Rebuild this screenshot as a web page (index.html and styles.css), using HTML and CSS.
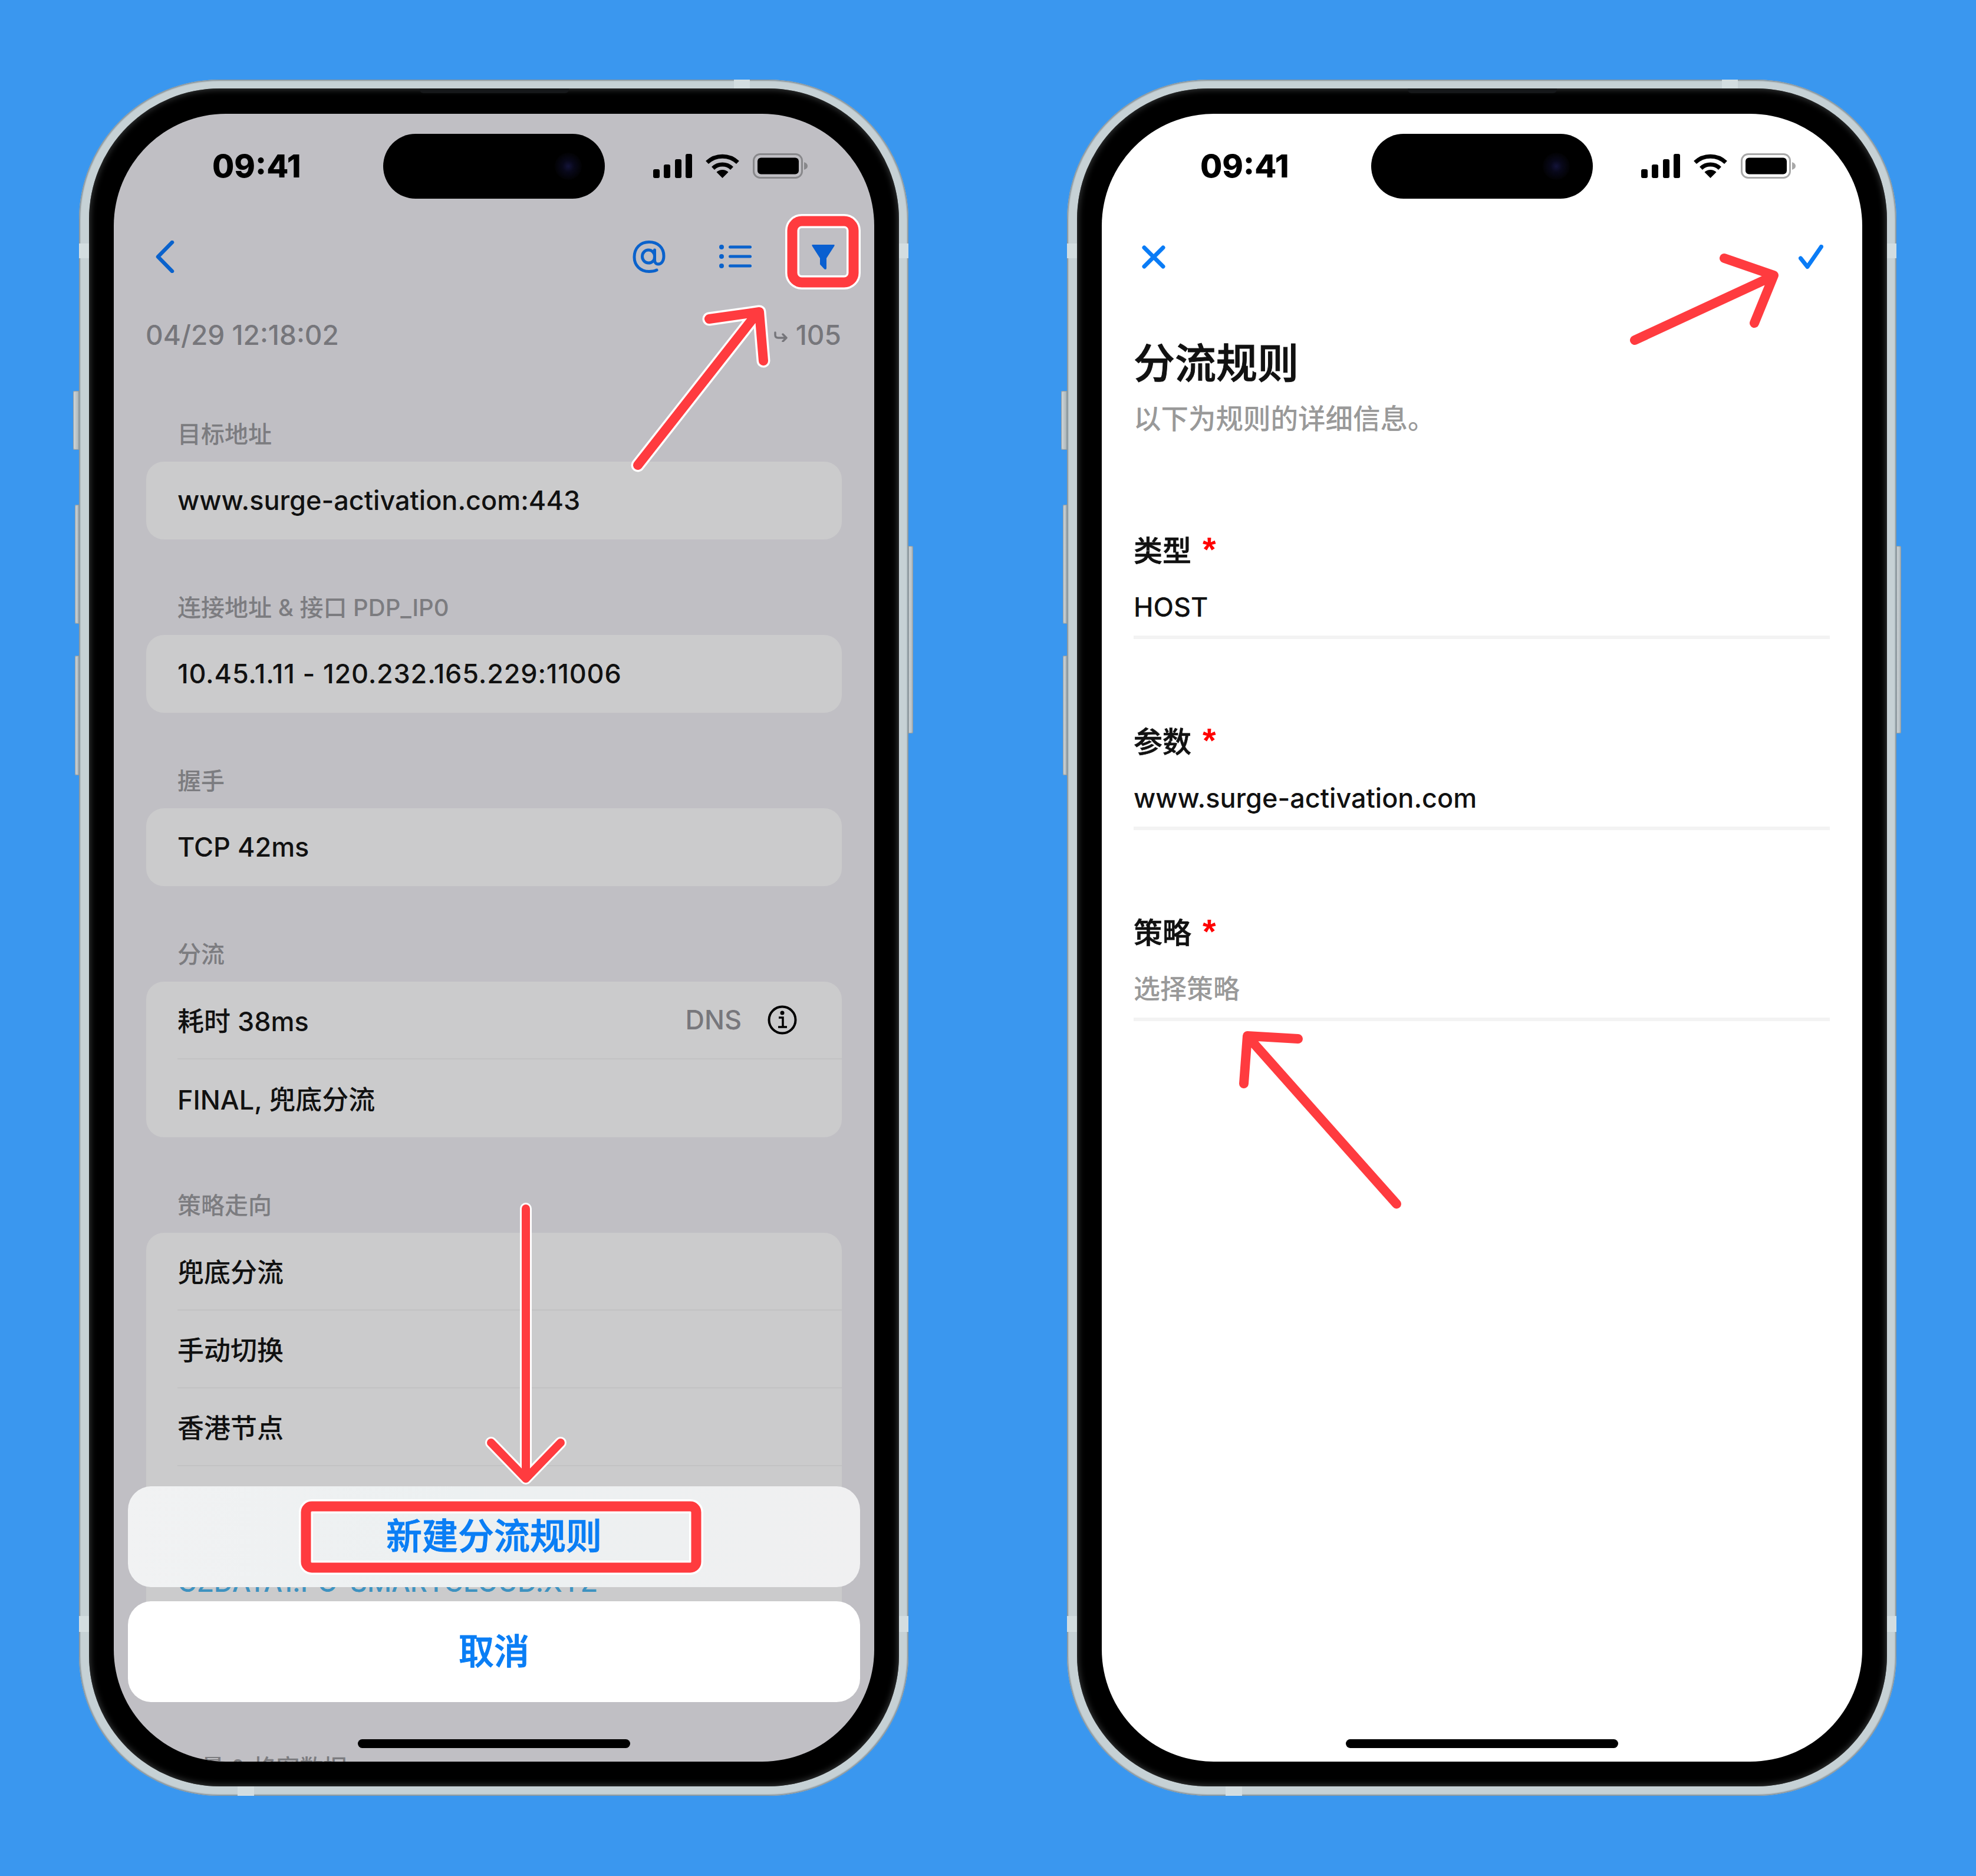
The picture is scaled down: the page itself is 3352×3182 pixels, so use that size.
FILE: index.html
```html
<!DOCTYPE html>
<html lang="zh-CN">
  <head>
    <meta charset="UTF-8" />
    <meta name="viewport" content="width=device-width, initial-scale=1.0" />
    <title>新建分流规则</title>
    <link rel="stylesheet" href="styles.css">
  </head>
  <body>
    <svg class="sprite" width="0" height="0">
      <symbol id="signal" viewBox="0 0 66 41">
        <rect x="0" y="26" width="11" height="15" rx="3" />
        <rect x="18" y="18" width="11" height="23" rx="3" />
        <rect x="37" y="9" width="11" height="32" rx="3" />
        <rect x="55" y="0" width="11" height="41" rx="3" />
      </symbol>
      <symbol id="wifi" viewBox="0 0 59 42">
        <path d="M3.5 15.5 A38 38 0 0 1 55.5 15.5" fill="none" stroke="#000" stroke-width="7" />
        <path d="M13.5 25.5 A23 23 0 0 1 45.5 25.5" fill="none" stroke="#000" stroke-width="7" />
        <path d="M29.5 42 L19.5 32 A14.5 14.5 0 0 1 39.5 32 Z" />
      </symbol>
    </svg>

    <div class="page">
      <!-- left phone: request detail with action sheet -->
      <div class="phone">
        <span class="btn btn-a"></span><span class="btn btn-b"></span><span class="btn btn-c"></span><span class="btn btn-r"></span>
        <span class="band band-top"></span><span class="band band-left"></span><span class="band band-right"></span>
        <span class="band band-bottom"></span><span class="band band-left2"></span><span class="band band-right2"></span>
        <div class="bezel">
          <span class="speaker"></span>
          <div class="screen screen-dim">
            <div class="status">
              <div class="time">09:41</div>
              <div class="island"><span class="camera"></span></div>
              <div class="status-icons">
                <svg class="ic-signal"><use href="#signal" /></svg>
                <svg class="ic-wifi"><use href="#wifi" /></svg>
                <svg class="ic-battery" viewBox="0 0 93 43">
                  <rect x="1.5" y="1.5" width="82" height="40" rx="11" fill="none" stroke="#88888b" stroke-width="3" />
                  <rect x="8" y="7.5" width="70" height="28" rx="6" />
                  <path d="M87 15 Q93 17 93 21.5 Q93 26 87 28 Z" fill="#88888b" />
                </svg>
              </div>
            </div>

            <div class="nav">
              <svg class="ic-back" viewBox="0 0 32 55"><path d="M28 3 L4 27.5 L28 52" /></svg>
              <svg class="ic-at" viewBox="0 0 56 55"><path d="M41 50 C37 52 33 52.500 28 52.500 C13 52.500 3 42 3 28 C3 13 13 2.500 28 2.500 C43 2.500 53 12 53 26 C53 35 49 40 43.500 40 C39.500 40 37.500 37 37.500 33 L37.500 16 M37.500 27 C37.500 34 33 38 27 38 C21 38 16.500 33 16.500 27 C16.500 21 21 16 27 16 C33 16 37.500 21 37.500 27" /></svg>
              <svg class="ic-list" viewBox="0 0 55 41">
                <circle cx="4" cy="4" r="4" /><circle cx="4" cy="20" r="4" /><circle cx="4" cy="36" r="4" />
                <rect x="16" y="1.500" width="39" height="5" rx="2.500" /><rect x="16" y="17.500" width="39" height="5" rx="2.500" /><rect x="16" y="33.500" width="39" height="5" rx="2.500" />
              </svg>
              <svg class="ic-filter" viewBox="0 0 39 44"><path d="M1 1 H38 Q39 1 38.500 3 L25 24 V41 Q25 43 23 43 Q22 43 21 42 L14.500 35 Q14 34.500 14 34 V24 L0.500 3 Q0 1 1 1 Z" /></svg>
            </div>

            <div class="meta">
              <span>04/29 12:18:02</span>
              <span class="meta-right">
                <svg class="ic-hook" viewBox="0 0 26 18"><path d="M3 2 V6 Q3 11 8 11 H22 M16 5 L22 11 L16 17" /></svg>
                <span>105</span>
              </span>
            </div>

            <div class="section section-first">
              <div class="label">目标地址</div>
              <div class="card"><div class="row">www.surge-activation.com:443</div></div>
            </div>
            <div class="section">
              <div class="label">连接地址 &amp; 接口 PDP_IP0</div>
              <div class="card"><div class="row row-num">10.45.1.11 - 120.232.165.229:11006</div></div>
            </div>
            <div class="section">
              <div class="label">握手</div>
              <div class="card"><div class="row">TCP 42ms</div></div>
            </div>
            <div class="section">
              <div class="label">分流</div>
              <div class="card">
                <div class="row">
                  <span class="row-main">耗时 38ms</span>
                  <span class="row-note">DNS</span>
                  <svg class="ic-info" viewBox="0 0 50 50">
                    <circle cx="25" cy="25" r="22.500" />
                    <path class="info-i" d="M19 21 H26 V37 M18 37 H33" />
                    <circle class="info-dot" cx="25" cy="13" r="3.500" />
                  </svg>
                </div>
                <div class="row">FINAL, 兜底分流</div>
              </div>
            </div>
            <div class="section">
              <div class="label">策略走向</div>
              <div class="card">
                <div class="row">兜底分流</div>
                <div class="row">手动切换</div>
                <div class="row">香港节点</div>
                <div class="row"></div>
                <div class="row row-link">CZDATA1.PO-SMARTCLOUD.XYZ</div>
                <div class="row"></div>
              </div>
            </div>
            <div class="section">
              <div class="label">流量 &amp; 格密数据</div>
            </div>

            <div class="sheets">
              <div class="sheet sheet-soft">新建分流规则</div>
              <div class="sheet">取消</div>
            </div>
            <div class="home"></div>
          </div>
        </div>
      </div>

      <!-- right phone: rule form -->
      <div class="phone">
        <span class="btn btn-a"></span><span class="btn btn-b"></span><span class="btn btn-c"></span><span class="btn btn-r"></span>
        <span class="band band-top"></span><span class="band band-left"></span><span class="band band-right"></span>
        <span class="band band-bottom"></span><span class="band band-left2"></span><span class="band band-right2"></span>
        <div class="bezel">
          <span class="speaker"></span>
          <div class="screen">
            <div class="status">
              <div class="time">09:41</div>
              <div class="island"><span class="camera"></span></div>
              <div class="status-icons">
                <svg class="ic-signal"><use href="#signal" /></svg>
                <svg class="ic-wifi"><use href="#wifi" /></svg>
                <svg class="ic-battery" viewBox="0 0 93 43">
                  <rect x="1.5" y="1.5" width="82" height="40" rx="11" fill="none" stroke="#a8a8a8" stroke-width="3" />
                  <rect x="8" y="7.5" width="70" height="28" rx="6" />
                  <path d="M87 15 Q93 17 93 21.5 Q93 26 87 28 Z" fill="#a8a8a8" />
                </svg>
              </div>
            </div>

            <div class="nav nav-form">
              <svg class="ic-close" viewBox="0 0 40 40"><path d="M4 4 L36 36 M36 4 L4 36" /></svg>
              <svg class="ic-check" viewBox="0 0 42 42"><path d="M3.500 23 L15 37.500 L38.500 3.500" /></svg>
            </div>

            <div class="form">
              <h1 class="form-title">分流规则</h1>
              <p class="form-sub">以下为规则的详细信息。</p>

              <div class="field field-first">
                <div class="field-label">类型 <span class="req">*</span></div>
                <div class="field-value">HOST</div>
              </div>
              <div class="field">
                <div class="field-label">参数 <span class="req">*</span></div>
                <div class="field-value">www.surge-activation.com</div>
              </div>
              <div class="field">
                <div class="field-label">策略 <span class="req">*</span></div>
                <div class="field-value field-empty">选择策略</div>
              </div>
            </div>
            <div class="home"></div>
          </div>
        </div>
      </div>

      <!-- red marks drawn on top of both phones -->
      <svg class="marks" viewBox="0 0 3352 3182">
        <g class="halo">
          <rect x="1344" y="375" width="104" height="104" rx="16" />
          <path class="thick" d="M1082 789 L1283 533 M1203 541 L1288 529 L1295 612" />
          <path d="M892 2050 V2508 M833 2447 L892 2508 L951 2447" />
          <rect x="519" y="2555" width="662" height="104" rx="10" />
        </g>
        <g class="ink">
          <rect class="box" x="1344" y="375" width="104" height="104" rx="16" />
          <path class="thick" d="M1082 789 L1283 533 M1203 541 L1288 529 L1295 612" />
          <path d="M892 2050 V2508 M833 2447 L892 2508 L951 2447" />
          <rect class="box" x="519" y="2555" width="662" height="104" rx="10" />
          <path class="thick" d="M2773 577 L3004 470 M2925 438 L3009 467 L2976 548" />
          <path class="thick" d="M2369 2042 L2120 1762 M2202 1762 L2116 1757 L2110 1838" />
        </g>
      </svg>
    </div>
  </body>
</html>
```

FILE: styles.css
```css
html,
body {
  margin: 0;
  height: 3182px;
  overflow: hidden;
  background-color: #3a97ef;
}
body {
  font-family: Inter, "Noto Sans CJK SC", sans-serif;
  color: #111;
}
.sprite {
  position: absolute;
}
.page {
  position: relative;
  display: flex;
  gap: 269px;
  padding: 135px 0 0 134px;
  height: 3047px;
}

/* phone body */
.phone {
  position: relative;
  box-sizing: border-box;
  width: 1407px;
  height: 2911px;
  padding: 15px 16px 16px 17px;
  border-radius: 238px;
  background: #c6d1d5;
  box-shadow: inset 0 0 2px 2px #87939a;
}
.btn {
  position: absolute;
  left: -7px;
  width: 7px;
  background: linear-gradient(90deg, #d4dadd, #a8b2b6);
  border-radius: 3px 0 0 3px;
  box-shadow: inset 0 0 1px 1px #8e999e;
}
.btn-a {
  left: -10px;
  width: 10px;
  top: 528px;
  height: 100px;
}
.btn-b {
  top: 721px;
  height: 202px;
}
.btn-c {
  top: 977px;
  height: 203px;
}
.btn-r {
  left: auto;
  right: -8px;
  width: 8px;
  top: 791px;
  height: 318px;
  border-radius: 0 3px 3px 0;
}
.band {
  position: absolute;
  background: #d3dde0;
}
.band-top {
  top: 0;
  left: 1111px;
  width: 27px;
  height: 15px;
}
.band-left {
  left: 0;
  top: 278px;
  width: 17px;
  height: 25px;
}
.band-right {
  right: 0;
  top: 278px;
  width: 16px;
  height: 25px;
}
.band-bottom {
  bottom: 0;
  left: 269px;
  width: 28px;
  height: 16px;
}
.band-left2 {
  left: 0;
  top: 2606px;
  width: 17px;
  height: 27px;
}
.band-right2 {
  right: 0;
  top: 2606px;
  width: 16px;
  height: 27px;
}
.bezel {
  position: relative;
  box-sizing: border-box;
  height: 2880px;
  padding: 43px 42px 42px;
  background: #000;
  border-radius: 222px;
  box-shadow: inset 0 0 12px 1px #3f4243;
}
.speaker {
  position: absolute;
  top: 0;
  left: 561px;
  width: 253px;
  height: 8px;
  background: #16181a;
  border-radius: 0 0 6px 6px;
}
.screen {
  position: relative;
  height: 2795px;
  overflow: hidden;
  background-color: #fff;
  border-radius: 190px;
}
.screen-dim {
  background-color: #c0bfc4;
}

/* status bar */
.status {
  display: grid;
  grid-template-columns: 457px 376px 1fr;
  padding-top: 34px;
  height: 110px;
}
.time {
  padding: 22px 0 0 167px;
  font-size: 54px;
  line-height: 66px;
  font-weight: 800;
  color: #000;
}
.island {
  position: relative;
  background: #000;
  border-radius: 55px;
}
.camera {
  position: absolute;
  left: 291px;
  top: 32px;
  width: 46px;
  height: 46px;
  border-radius: 50%;
  background: radial-gradient(circle, #14143a 0, #08081a 30%, #020204 70%);
}
.status-icons {
  display: flex;
  align-items: center;
  padding: 0 0 2px 82px;
}
.ic-signal {
  width: 66px;
  height: 41px;
  margin-right: 22px;
}
.ic-wifi {
  width: 59px;
  height: 42px;
  margin-right: 22px;
}
.ic-battery {
  width: 93px;
  height: 43px;
}

/* nav bar */
.nav {
  display: flex;
  align-items: center;
  height: 55px;
  margin-top: 71px;
  padding: 0 67px 0 71px;
  color: #0a62cc;
}
.nav svg {
  display: block;
}
.ic-back {
  width: 32px;
  height: 55px;
  margin-right: auto;
}
.ic-back path {
  fill: none;
  stroke: #0a62cc;
  stroke-width: 6.5;
  stroke-linecap: round;
  stroke-linejoin: round;
}
.ic-at {
  width: 56px;
  height: 55px;
  margin-right: 91px;
}
.ic-at path {
  fill: none;
  stroke: #0a62cc;
  stroke-width: 5;
  stroke-linecap: round;
}
.ic-list {
  width: 55px;
  height: 41px;
  margin-right: 102px;
  fill: #0a62cc;
}
.ic-filter {
  width: 39px;
  height: 44px;
  fill: #0a5fd0;
}
.nav-form {
  justify-content: space-between;
  padding: 0 66px 0 68px;
}
.ic-close {
  width: 40px;
  height: 40px;
}
.ic-close path,
.ic-check path {
  fill: none;
  stroke: #0a7cf6;
  stroke-width: 7;
  stroke-linecap: round;
  stroke-linejoin: round;
}
.ic-check {
  width: 42px;
  height: 42px;
}

/* request detail */
.meta {
  display: flex;
  justify-content: space-between;
  margin-top: 77px;
  padding: 0 56px 0 54px;
  font-size: 46px;
  line-height: 56px;
  font-weight: 500;
  color: #76767b;
}
.meta-right {
  display: flex;
  align-items: center;
  gap: 12px;
}
.ic-hook {
  width: 26px;
  height: 18px;
  margin-top: 6px;
}
.ic-hook path {
  fill: none;
  stroke: #76767b;
  stroke-width: 3.5;
  stroke-linecap: round;
  stroke-linejoin: round;
}
.section {
  margin-top: 91px;
  padding: 0 55px;
}
.section-first {
  margin-top: 116px;
}
.label {
  padding: 2px 0 0 53px;
  font-size: 40px;
  line-height: 46px;
  font-weight: 500;
  color: #7c7c80;
}
.card {
  margin-top: 23px;
  overflow: hidden;
  background-color: #cbcbcc;
  border-radius: 30px;
}
.row {
  display: flex;
  align-items: center;
  box-sizing: border-box;
  height: 132px;
  margin-left: 53px;
  padding: 0 76px 1px 0;
  font-size: 45px;
  font-weight: 500;
  color: #111;
  border-bottom: 2px solid #c2c2c3;
}
.row:last-child {
  border-bottom: none;
}
.row-num {
  letter-spacing: 0.8px;
}
.row-main {
  margin-right: auto;
}
.row-note {
  margin-right: 44px;
  color: #77777c;
}
.row-link {
  color: #3d92c0;
}
.ic-info {
  width: 50px;
  height: 50px;
  fill: none;
  stroke: #000;
  stroke-width: 4;
}
.info-i {
  stroke-width: 3.5;
}
.info-dot {
  fill: #000;
  stroke: none;
}

/* action sheet */
.sheets {
  position: absolute;
  left: 24px;
  right: 24px;
  top: 2328px;
  display: flex;
  flex-direction: column;
  gap: 24px;
}
.sheet {
  height: 171px;
  background-color: #fff;
  border-radius: 40px;
  text-align: center;
  font-size: 60px;
  font-weight: 500;
  line-height: 171px;
  color: #0a7ef5;
  -webkit-text-stroke: 1px #0a7ef5;
}
.sheet-soft {
  font-size: 61px;
  background: linear-gradient(90deg, #f1f2f3, #ecf0f1 45%, #f0f0f1);
}
.home {
  position: absolute;
  left: 414px;
  width: 462px;
  top: 2757px;
  height: 15px;
  background: #000;
  border-radius: 8px;
}

/* rule form */
.form {
  padding: 0 55px 0 54px;
}
.form-title {
  margin: 114px 0 0;
  font-size: 70px;
  line-height: 80px;
  font-weight: 500;
  -webkit-text-stroke: 1px #111;
}
.form-sub {
  margin: 23px 0 0;
  font-size: 46.500px;
  line-height: 60px;
  font-weight: 500;
  color: #999;
}
.field {
  height: 182px;
  margin-top: 142px;
  border-bottom: 6px solid #f3f3f3;
  box-sizing: border-box;
}
.field-first {
  margin-top: 162px;
}
.field-label {
  padding-top: 3px;
  height: 57px;
  font-size: 49px;
  line-height: 60px;
  font-weight: 500;
  -webkit-text-stroke: 0.7px #111;
}
.req {
  margin-left: 6px;
  font-family: "Liberation Sans", sans-serif;
  font-size: 58px;
  line-height: 0;
  font-weight: 700;
  color: #f00;
  -webkit-text-stroke: 0;
}
.field-value {
  margin-top: 38px;
  font-size: 45px;
  line-height: 60px;
  font-weight: 500;
}
.field-empty {
  color: #999;
}

/* annotations */
.marks {
  position: absolute;
  left: 0;
  top: 0;
  width: 3352px;
  height: 3182px;
  fill: none;
  stroke-linecap: round;
  stroke-linejoin: round;
}
.halo {
  stroke: #fff;
  stroke-width: 20;
}
.halo rect {
  stroke-width: 24;
}
.halo .thick {
  stroke-width: 23;
}
.ink {
  stroke: #ff3b3f;
  stroke-width: 14;
}
.ink .thick {
  stroke-width: 16;
}
.box {
  stroke-width: 17;
}
```
